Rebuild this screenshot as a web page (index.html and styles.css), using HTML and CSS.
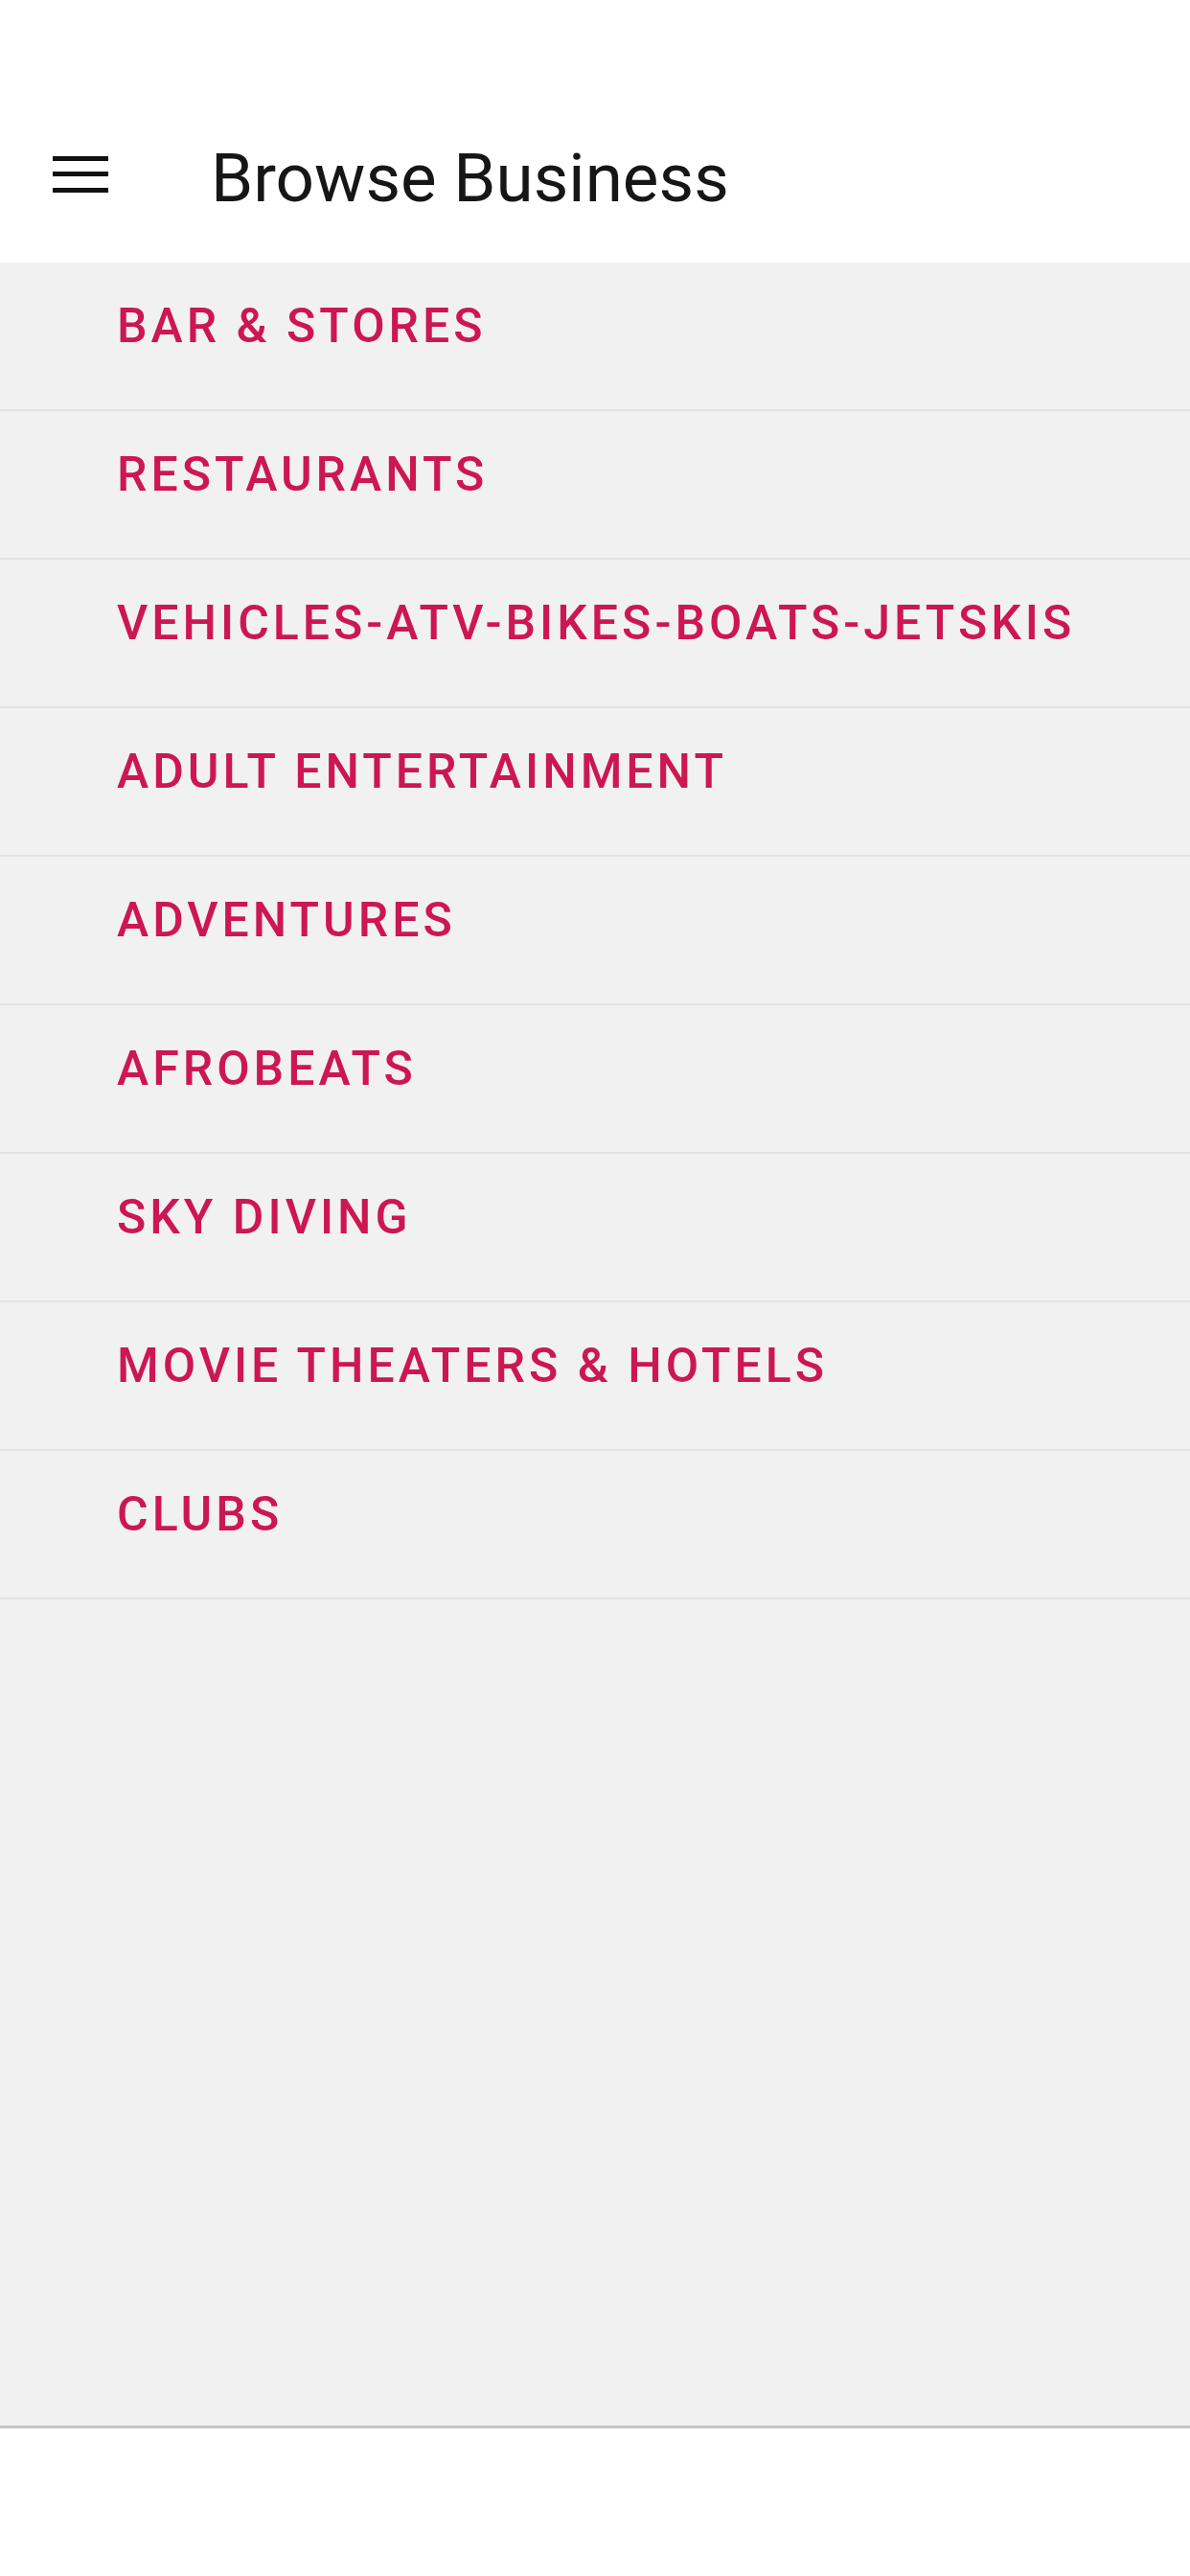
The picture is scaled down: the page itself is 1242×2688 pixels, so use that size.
FILE: index.html
```html
<!DOCTYPE html>
<html lang="en">
<head>
    <meta charset="UTF-8">
    <meta name="viewport" content="width=device-width, initial-scale=1.0">
    <title>Browse Business</title>
    <link rel="stylesheet" href="styles.css">
</head>
<body>

<header class="app-bar">
    <div class="toolbar">
        <svg class="menu-icon" viewBox="0 0 58 38" width="58" height="38">
            <rect x="0" y="0" width="58" height="5"/>
            <rect x="0" y="16" width="58" height="5"/>
            <rect x="0" y="33" width="58" height="5"/>
        </svg>
        <h1 class="title">Browse Business</h1>
    </div>
</header>

<main class="category-list">
    <a class="category" href="#">BAR &amp; STORES</a>
    <a class="category" href="#">RESTAURANTS</a>
    <a class="category" href="#">VEHICLES-ATV-BIKES-BOATS-JETSKIS</a>
    <a class="category" href="#">ADULT ENTERTAINMENT</a>
    <a class="category" href="#">ADVENTURES</a>
    <a class="category" href="#">AFROBEATS</a>
    <a class="category" href="#">SKY DIVING</a>
    <a class="category" href="#">MOVIE THEATERS &amp; HOTELS</a>
    <a class="category" href="#">CLUBS</a>
</main>

<footer class="bottom-space"></footer>

</body>
</html>
```

FILE: styles.css
```css
:root {
    --accent-color: #cc1752;
    --text-color: #161616;
    --list-bg-color: #f1f1f1;
    --divider-color: #e2e2e2;
    --bottom-border-color: #c6c6c6;
}

body {
    margin: 0;
    font-family: Roboto, "Liberation Sans", Arial, sans-serif;
    background: #fff;
    width: 1242px;
}

.app-bar {
    padding-top: 90px;
    background: #fff;
}

.toolbar {
    height: 184px;
    display: flex;
    align-items: center;
    padding-left: 55px;
}

.menu-icon {
    fill: #111;
    flex-shrink: 0;
}

.title {
    margin: 8px 0 0 107px;
    font-size: 71px;
    font-weight: 400;
    line-height: 80px;
    color: var(--text-color);
}

.category-list {
    height: 2257px;
    background: var(--list-bg-color);
    border-bottom: 3px solid var(--bottom-border-color);
    display: flex;
    flex-direction: column;
}

.category {
    display: block;
    height: 155px;
    flex-shrink: 0;
    padding: 36px 0 0 122px;
    box-sizing: border-box;
    border-bottom: 2px solid var(--divider-color);
    font-size: 50px;
    font-weight: 500;
    line-height: 60px;
    letter-spacing: 4px;
    color: var(--accent-color);
    text-decoration: none;
}

.bottom-space {
    height: 154px;
}
```
